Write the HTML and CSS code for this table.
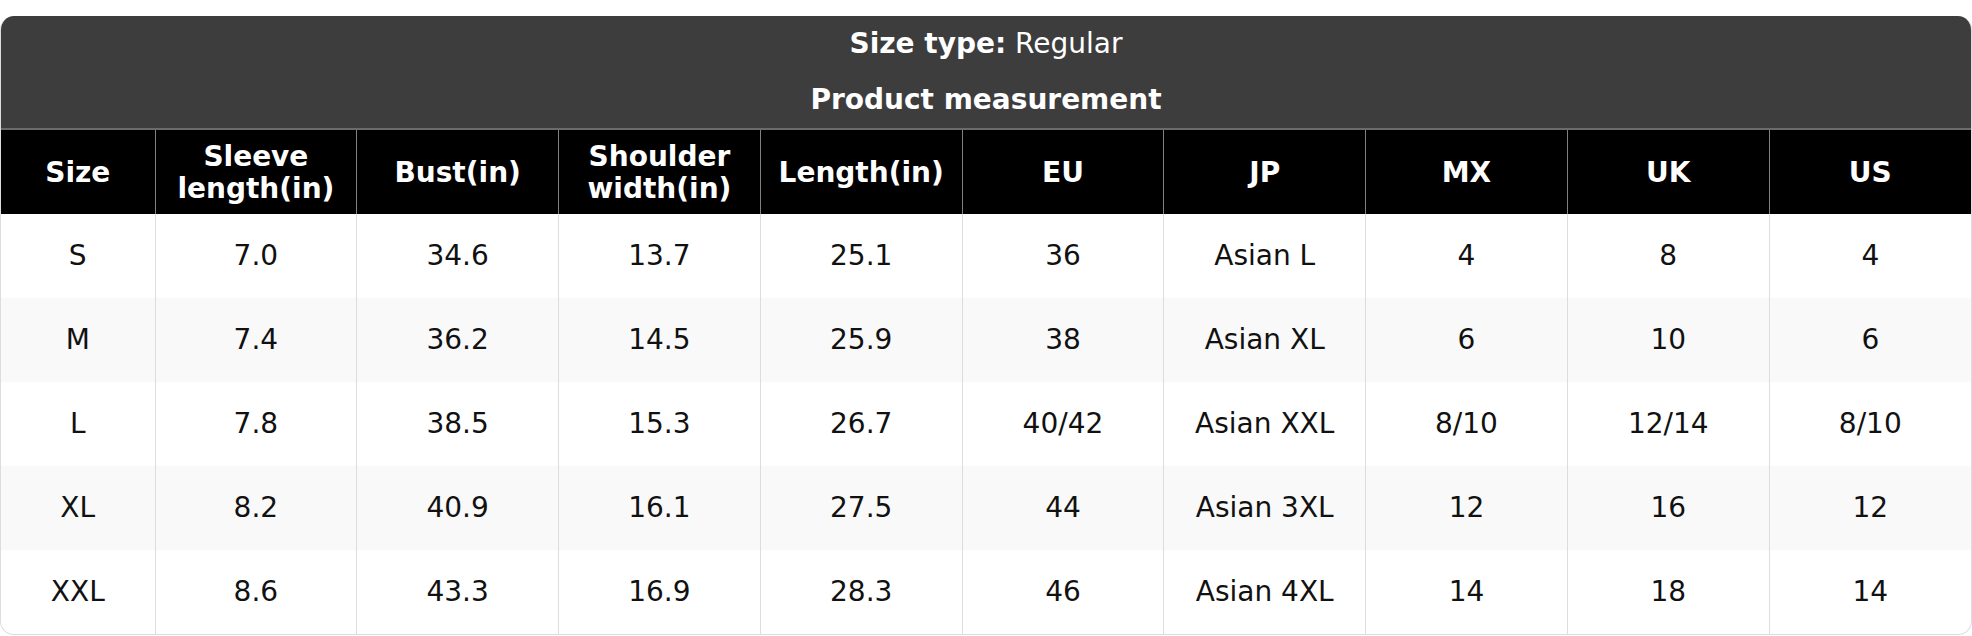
FILE: index.html
```html
<!DOCTYPE html>
<html>
<head>
<meta charset="utf-8">
<link rel="stylesheet" href="styles.css">
</head>
<body>
<div class="card">
  <div class="title">
    <div class="title-line"><b>Size type:</b> Regular</div>
    <div class="title-line"><b>Product measurement</b></div>
  </div>
  <table class="chart">
    <colgroup>
      <col class="c-first">
      <col class="c"><col class="c"><col class="c"><col class="c"><col class="c">
      <col class="c"><col class="c"><col class="c"><col class="c">
    </colgroup>
    <thead>
      <tr>
        <th>Size</th>
        <th>Sleeve<br>length(in)</th>
        <th>Bust(in)</th>
        <th>Shoulder<br>width(in)</th>
        <th>Length(in)</th>
        <th>EU</th>
        <th>JP</th>
        <th>MX</th>
        <th>UK</th>
        <th>US</th>
      </tr>
    </thead>
    <tbody>
      <tr><td>S</td><td>7.0</td><td>34.6</td><td>13.7</td><td>25.1</td><td>36</td><td>Asian L</td><td>4</td><td>8</td><td>4</td></tr>
      <tr><td>M</td><td>7.4</td><td>36.2</td><td>14.5</td><td>25.9</td><td>38</td><td>Asian XL</td><td>6</td><td>10</td><td>6</td></tr>
      <tr><td>L</td><td>7.8</td><td>38.5</td><td>15.3</td><td>26.7</td><td>40/42</td><td>Asian XXL</td><td>8/10</td><td>12/14</td><td>8/10</td></tr>
      <tr><td>XL</td><td>8.2</td><td>40.9</td><td>16.1</td><td>27.5</td><td>44</td><td>Asian 3XL</td><td>12</td><td>16</td><td>12</td></tr>
      <tr><td>XXL</td><td>8.6</td><td>43.3</td><td>16.9</td><td>28.3</td><td>46</td><td>Asian 4XL</td><td>14</td><td>18</td><td>14</td></tr>
    </tbody>
  </table>
</div>
</body>
</html>
```

FILE: styles.css
```css
html, body {
  margin: 0;
  padding: 0;
  background: #ffffff;
}
body {
  font-family: "DejaVu Sans", "Liberation Sans", sans-serif;
  padding-top: 16px;
}
.card {
  width: 1972px;
  box-sizing: border-box;
  border: 1px solid #dddddd;
  border-top: none;
  border-radius: 14px;
  overflow: hidden;
}
.title {
  background: #3d3d3d;
  color: #ffffff;
  text-align: center;
  padding: 12px 0 12px;
  display: flex;
  flex-direction: column;
  gap: 24px;
}
.title-line {
  font-size: 28px;
  line-height: 32px;
}
.chart {
  width: 100%;
  border-collapse: collapse;
  table-layout: fixed;
}
.c-first { width: 154px; }
.chart th {
  background: #000000;
  color: #ffffff;
  font-weight: bold;
  font-size: 28px;
  line-height: 32px;
  height: 83px;
  padding: 1px 4px 0;
  border-top: 2px solid #6b6b6b;
  border-left: 1px solid #808080;
  text-align: center;
  vertical-align: middle;
}
.chart th:first-child { border-left: none; }
.chart td {
  font-size: 28px;
  line-height: 32px;
  height: 84px;
  padding: 0;
  color: #111111;
  text-align: center;
  vertical-align: middle;
  border-left: 1px solid #dddddd;
}
.chart td:first-child { border-left: none; }
.chart tbody tr:nth-child(even) td { background: #f9f9f9; }
```
